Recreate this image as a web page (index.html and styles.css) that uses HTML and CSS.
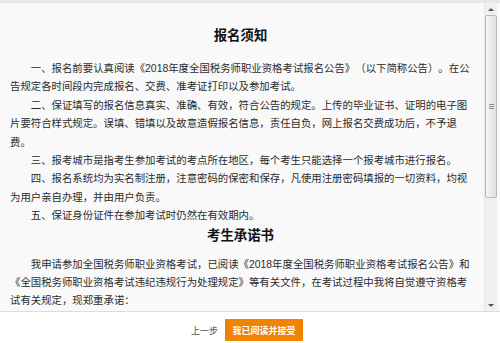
FILE: index.html
```html
<!DOCTYPE html>
<html lang="zh-CN">
<head>
    <meta charset="UTF-8" />
    <meta name="viewport" content="width=device-width, initial-scale=1.0"/>
    <title>报名须知</title>
    <link rel="stylesheet" href="styles.css">
</head>
<body>
    <div class="topbar"></div>

    <div class="viewer">
        <div class="content">
            <h2 class="title">报名须知</h2>
            <p>一、报名前要认真阅读《2018年度全国税务师职业资格考试报名公告》（以下简称公告）。在公告规定各时间段内完成报名、交费、准考证打印以及参加考试。</p>
            <p>二、保证填写的报名信息真实、准确、有效，符合公告的规定。上传的毕业证书、证明的电子图片要符合样式规定。误填、错填以及故意造假报名信息，责任自负，网上报名交费成功后，不予退费。</p>
            <p>三、报考城市是指考生参加考试的考点所在地区，每个考生只能选择一个报考城市进行报名。</p>
            <p>四、报名系统均为实名制注册，注意密码的保密和保存，凡使用注册密码填报的一切资料，均视为用户亲自办理，并由用户负责。</p>
            <p>五、保证身份证件在参加考试时仍然在有效期内。</p>

            <h2 class="title title-pledge">考生承诺书</h2>
            <p>我申请参加全国税务师职业资格考试，已阅读《2018年度全国税务师职业资格考试报名公告》和《全国税务师职业资格考试违纪违规行为处理规定》等有关文件，在考试过程中我将自觉遵守资格考试有关规定，现郑重承诺：</p>
        </div>

        <!-- barra de desplazamiento dibujada -->
        <div class="scrollbar">
            <div class="sb-btn"><span class="arrow-up"></span></div>
            <div class="sb-track">
                <div class="sb-thumb"><span class="sb-grip"></span></div>
            </div>
            <div class="sb-btn"><span class="arrow-down"></span></div>
        </div>
    </div>

    <div class="footer">
        <a class="prev" href="#">上一步</a>
        <button class="accept">我已阅读并接受</button>
    </div>
</body>
</html>
```

FILE: styles.css
```css
body {
    margin: 0;
    padding: 0;
    background: #fff;
    font-family: "Microsoft YaHei", "Liberation Sans", "Noto Sans CJK SC", sans-serif;
    color: #2b2b2b;
    width: 500px;
    height: 343px;
    overflow: hidden;
    text-spacing-trim: space-all;
}

.topbar {
    height: 2px;
    background: #e3e9ef;
}

.viewer {
    display: flex;
    height: 310px;
    box-sizing: border-box;
    background: #f9f9f9;
    border-top: 1px solid #e6e6e6;
    border-bottom: 1px solid #dcdcdc;
}

.content {
    flex: 1;
    overflow: hidden;
    padding: 23px 0 0 10px;
}

.content p {
    width: 462px;
    margin: 0;
    font-size: 10.4px;
    line-height: 18.4px;
    text-indent: 2em;
}

.title {
    margin: 0 0 14px;
    padding-right: 13px;
    font-size: 13.4px;
    line-height: 20px;
    text-align: center;
    color: #111;
}

.title-pledge {
    margin-bottom: 10px;
}

.scrollbar {
    width: 12px;
    margin-right: 3px;
    display: flex;
    flex-direction: column;
    background: #f0f0f0;
    border-left: 1px solid #e8e8e8;
}

.sb-btn {
    height: 12px;
    display: flex;
    align-items: center;
    justify-content: center;
}

.arrow-up {
    width: 0;
    height: 0;
    border-left: 3px solid transparent;
    border-right: 3px solid transparent;
    border-bottom: 3px solid #555;
}

.arrow-down {
    width: 0;
    height: 0;
    border-left: 3px solid transparent;
    border-right: 3px solid transparent;
    border-top: 3px solid #555;
}

.sb-track {
    flex: 1;
}

.sb-thumb {
    height: 183px;
    box-sizing: border-box;
    border: 1px solid #b8b8b8;
    border-radius: 2px;
    background: linear-gradient(to right, #f6f6f6, #e0e0e0);
    display: flex;
    align-items: center;
    justify-content: center;
}

.sb-grip {
    width: 5px;
    height: 5px;
    background: repeating-linear-gradient(#8c8c8c 0 1px, transparent 1px 2px);
}

.footer {
    display: flex;
    align-items: center;
    justify-content: center;
    gap: 7px;
    padding: 7px 6px 0 0;
}

.prev {
    font-size: 9px;
    color: #555;
    text-decoration: none;
}

.accept {
    width: 78px;
    height: 22px;
    padding: 0;
    border: none;
    background: #f08300;
    color: #fff;
    font-family: inherit;
    font-size: 9px;
    font-weight: bold;
    cursor: pointer;
}
```
